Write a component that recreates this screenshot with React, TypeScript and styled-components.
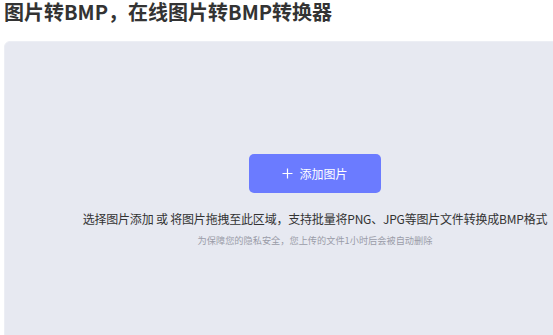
import React from 'react';
import styled, { createGlobalStyle } from 'styled-components';

const GlobalStyle = createGlobalStyle`
    html, body {
        margin: 0;
        padding: 0;
        background: #ffffff;
        overflow: hidden;
    }

    body {
        font-family: "Noto Sans CJK SC", "Noto Sans", sans-serif;
        color: #333;
    }
`;

function PlusIcon() {
    return (
        <svg width="11" height="11" viewBox="0 0 11 11" fill="none">
            <path d="M5.5 0.5V10.5M0.5 5.5H10.5" stroke="currentColor" strokeWidth="1.2" />
        </svg>
    );
}

function App() {
    return (
        <Page>
            <GlobalStyle />
            <Title>图片转BMP，在线图片转BMP转换器</Title>
            <DropZone>
                <AddButton type="button">
                    <PlusIcon />
                    添加图片
                </AddButton>
                <Hint>选择图片添加 或 将图片拖拽至此区域，支持批量将PNG、JPG等图片文件转换成BMP格式</Hint>
                <Notice>为保障您的隐私安全，您上传的文件1小时后会被自动删除</Notice>
            </DropZone>
        </Page>
    );
}

const Page = styled.div`
    width: 622px;
    padding: 0 4px;
`;

const Title = styled.h1`
    width: fit-content;
    margin: 0;
    font-size: 20px;
    line-height: 24px;
    font-weight: 700;
    color: #333;
    white-space: nowrap;
`;

const DropZone = styled.div`
    margin-top: 17px;
    height: 320px;
    box-sizing: border-box;
    padding-top: 112px;

    display: flex;
    flex-direction: column;
    align-items: center;

    background-color: #e7e9f1;
    border: 1px solid #eceef4;
    border-radius: 6px;
`;

const AddButton = styled.button`
    display: flex;
    justify-content: center;
    align-items: center;
    gap: 6px;

    width: 132px;
    height: 39px;
    padding: 0;

    font-family: inherit;
    font-size: 12px;
    color: #ffffff;

    background-color: #6b7bff;
    border: none;
    border-radius: 5px;
    cursor: pointer;
`;

const Hint = styled.p`
    margin: 17px 0 0;
    font-size: 12px;
    letter-spacing: -0.2px;
    line-height: 18px;
    color: #333;
    white-space: nowrap;
`;

const Notice = styled.p`
    margin: 5px 0 0;
    font-size: 9.2px;
    line-height: 14px;
    color: #9a9ca8;
    white-space: nowrap;
`;

export default App;
